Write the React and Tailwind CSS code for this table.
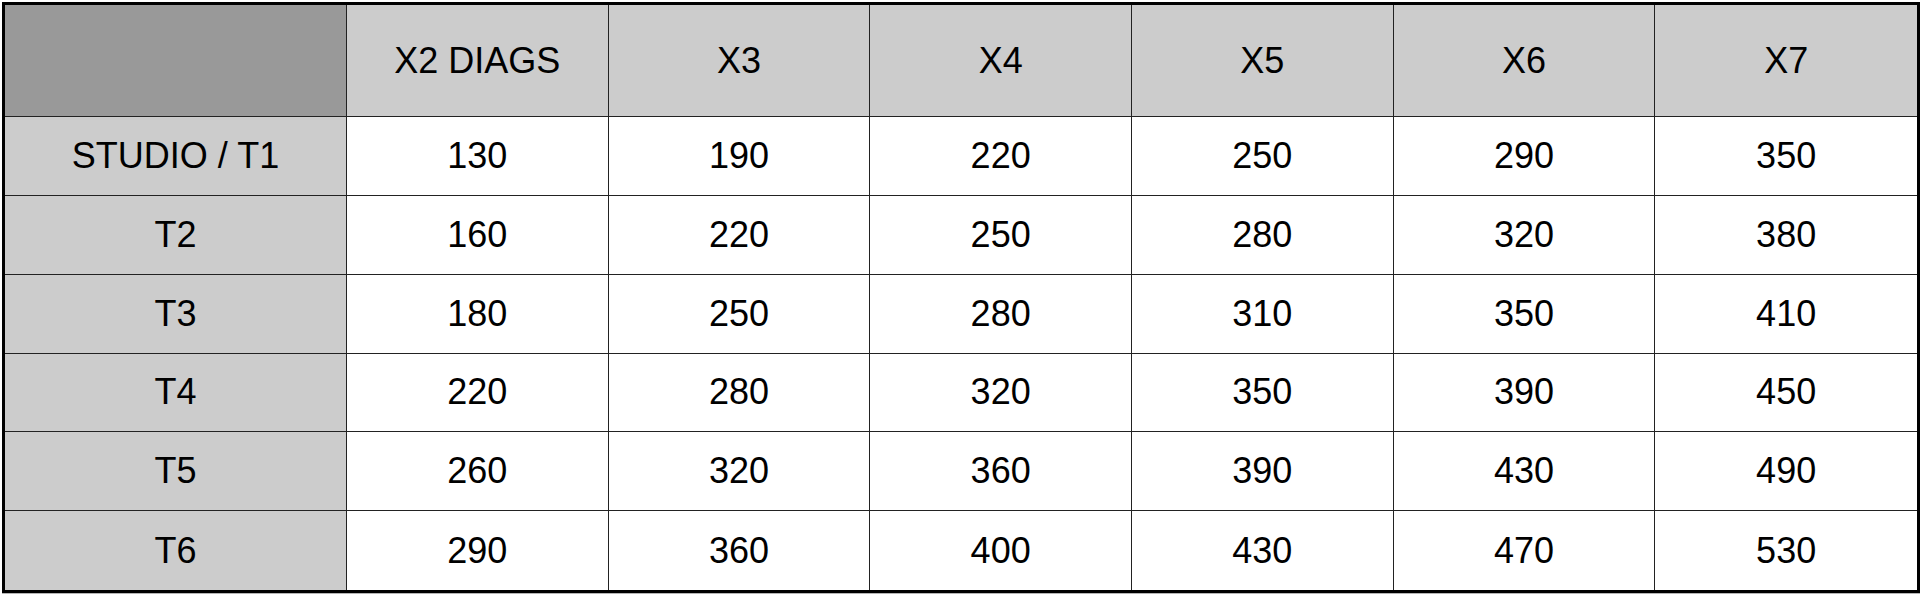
import React from 'react';

const cols = ['X2 DIAGS', 'X3', 'X4', 'X5', 'X6', 'X7'];

const rows = [
  { label: 'STUDIO / T1', values: [130, 190, 220, 250, 290, 350] },
  { label: 'T2', values: [160, 220, 250, 280, 320, 380] },
  { label: 'T3', values: [180, 250, 280, 310, 350, 410] },
  { label: 'T4', values: [220, 280, 320, 350, 390, 450] },
  { label: 'T5', values: [260, 320, 360, 390, 430, 490] },
  { label: 'T6', values: [290, 360, 400, 430, 470, 530] },
];

export default function App() {
  return (
    <div className="w-[1920px] h-[596px] bg-white pt-[2px] pl-[2px]" style={{ fontFamily: '"Liberation Sans", Arial, sans-serif' }}>
      {/* price grid */}
      <div className="w-[1918px] h-[591px] border-[3px] border-black shadow-[0_1px_0_#b5b5b5]">
        <div className="grid h-full grid-cols-[342px_repeat(6,minmax(0,1fr))] grid-rows-[112px_repeat(6,minmax(0,1fr))] text-[36px] text-black">
          <div className="bg-[#999999] border-r border-b border-[#222222]" />
          {cols.map((c, i) => (
            <div
              key={c}
              className={
                i === cols.length - 1
                  ? 'bg-[#cccccc] border-b border-[#222222] flex items-center justify-center'
                  : 'bg-[#cccccc] border-r border-b border-[#222222] flex items-center justify-center'
              }
            >
              {c}
            </div>
          ))}

          {rows.map((r, ri) => {
            const last = ri === rows.length - 1;
            return (
              <React.Fragment key={r.label}>
                <div
                  className={
                    last
                      ? 'bg-[#cccccc] border-r border-[#222222] flex items-center justify-center'
                      : 'bg-[#cccccc] border-r border-b border-[#222222] flex items-center justify-center'
                  }
                >
                  {r.label}
                </div>
                {r.values.map((v, vi) => {
                  const lastCol = vi === r.values.length - 1;
                  let cls = 'bg-white flex items-center justify-center border-[#222222]';
                  if (!lastCol) cls += ' border-r';
                  if (!last) cls += ' border-b';
                  return (
                    <div key={vi} className={cls}>
                      {v}
                    </div>
                  );
                })}
              </React.Fragment>
            );
          })}
        </div>
      </div>
    </div>
  );
}
